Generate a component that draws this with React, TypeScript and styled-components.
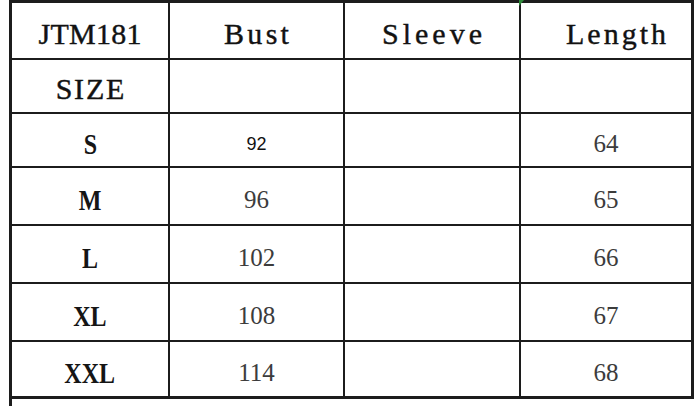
import React from 'react';
import styled, { createGlobalStyle } from 'styled-components';

const GlobalStyle = createGlobalStyle`
  html, body {
    margin: 0;
    padding: 0;
    background: #ffffff;
  }
  body {
    width: 696px;
    height: 406px;
    overflow: hidden;
  }
`;

const Page = styled.div`
  padding-left: 9px;
`;

const Sheet = styled.div`
  display: grid;
  width: 685px;
  grid-template-columns: 156px 173px 174px 170px;
  grid-template-rows: 55px 52px 52px 56px 56px 56px 54px;
  gap: 2px;
  padding: 3px;
  box-sizing: border-box;
  background: #1c1c1c;
`;

const Cell = styled.div<{ $shift?: number; $offset?: number }>`
  position: relative;
  display: flex;
  align-items: center;
  justify-content: center;
  background: #ffffff;
  padding-top: ${({ $shift }) => $shift ?? 8}px;
  padding-left: ${({ $offset }) => $offset ?? 0}px;
  box-sizing: border-box;
`;

const HeadText = styled.span<{ $track?: number }>`
  font-family: 'Liberation Serif', 'Times New Roman', serif;
  font-size: 30px;
  letter-spacing: ${({ $track }) => $track ?? 0}px;
  margin-right: ${({ $track }) => -($track ?? 0)}px;
  color: #121212;
  -webkit-text-stroke: 0.4px #121212;
`;

const SizeText = styled.span`
  display: inline-block;
  font-family: 'Liberation Serif', 'Times New Roman', serif;
  font-weight: bold;
  font-size: 30px;
  color: #151515;
  transform: scaleX(0.8);
`;

const Value = styled.span<{ $sans?: boolean }>`
  font-family: ${({ $sans }) =>
    $sans ? "'Liberation Sans', Arial, sans-serif" : "'Liberation Serif', 'Times New Roman', serif"};
  font-size: ${({ $sans }) => ($sans ? 18 : 25)}px;
  color: ${({ $sans }) => ($sans ? '#111111' : '#3c3c3c')};
`;

const CommentMark = styled.span`
  position: absolute;
  top: -3px;
  left: -2px;
  width: 0;
  height: 0;
  border-top: 6px solid #2e8b3a;
  border-right: 5px solid transparent;
`;

const Tail = styled.div`
  height: 7px;
  width: 0;
  border-left: 3px solid #1c1c1c;
`;

const sizes = [
  { size: 'S', bust: '92', length: '64', sans: true },
  { size: 'M', bust: '96', length: '65' },
  { size: 'L', bust: '102', length: '66' },
  { size: 'XL', bust: '108', length: '67' },
  { size: 'XXL', bust: '114', length: '68' },
];

const App: React.FC = () => {
  return (
    <>
      <GlobalStyle />
      <Page>
        <Sheet>
          <Cell $shift={6}>
            <HeadText $track={0.3}>JTM181</HeadText>
          </Cell>
          <Cell $shift={6}>
            <HeadText $track={3.3}>Bust</HeadText>
          </Cell>
          <Cell $shift={6}>
            <HeadText $track={4}>Sleeve</HeadText>
          </Cell>
          <Cell $shift={6} $offset={20}>
            <CommentMark />
            <HeadText $track={3}>Length</HeadText>
          </Cell>

          <Cell $shift={6}>
            <HeadText $track={1.8}>SIZE</HeadText>
          </Cell>
          <Cell />
          <Cell />
          <Cell />

          {sizes.map((row) => (
            <React.Fragment key={row.size}>
              <Cell>
                <SizeText>{row.size}</SizeText>
              </Cell>
              <Cell>
                <Value $sans={row.sans}>{row.bust}</Value>
              </Cell>
              <Cell />
              <Cell>
                <Value>{row.length}</Value>
              </Cell>
            </React.Fragment>
          ))}
        </Sheet>
        <Tail />
      </Page>
    </>
  );
};

export default App;
